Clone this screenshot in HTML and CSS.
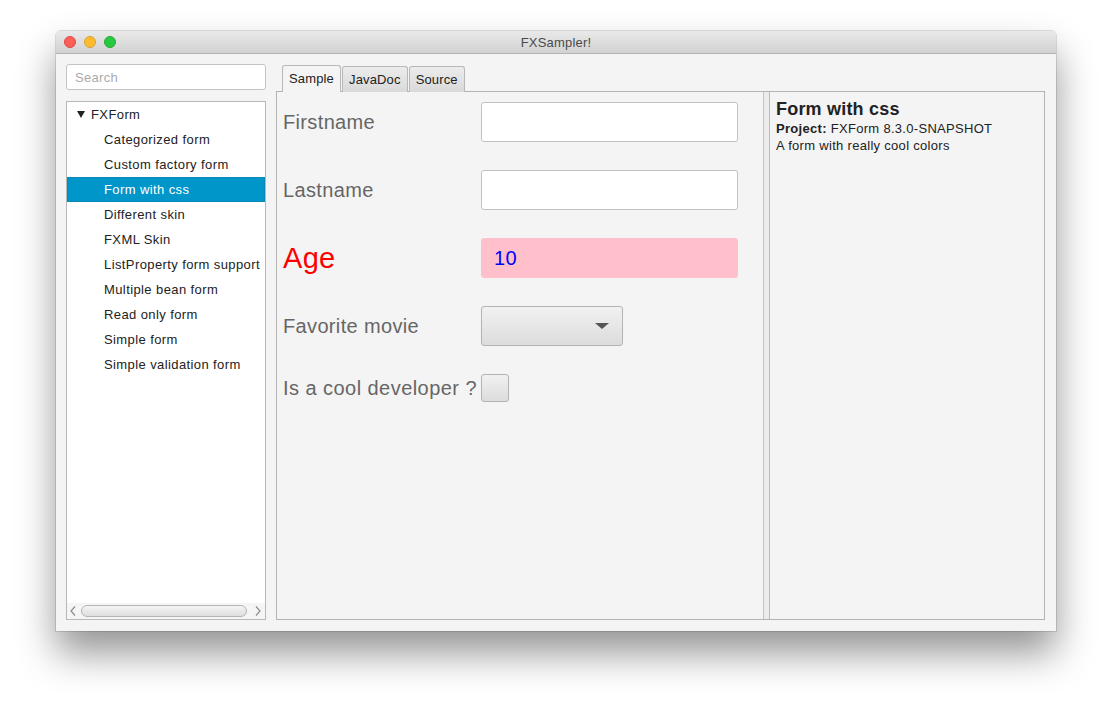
FILE: index.html
```html
<!DOCTYPE html>
<html>
<head>
<meta charset="utf-8">
<title>FXSampler!</title>
<link rel="stylesheet" href="styles.css">
</head>
<body>
<div class="window">
  <div class="titlebar">
    <div class="lights">
      <span class="light red"></span>
      <span class="light yellow"></span>
      <span class="light green"></span>
    </div>
    <div class="title">FXSampler!</div>
  </div>
  <div class="main">
    <div class="sidebar">
      <div class="search">Search</div>
      <div class="tree">
        <div class="tree-rows">
          <div class="row root"><span class="arrow"></span>FXForm</div>
          <div class="row child">Categorized form</div>
          <div class="row child">Custom factory form</div>
          <div class="row child selected">Form with css</div>
          <div class="row child">Different skin</div>
          <div class="row child">FXML Skin</div>
          <div class="row child">ListProperty form support</div>
          <div class="row child">Multiple bean form</div>
          <div class="row child">Read only form</div>
          <div class="row child">Simple form</div>
          <div class="row child">Simple validation form</div>
        </div>
        <div class="hscroll">
          <svg class="sarrow" width="8" height="12" viewBox="0 0 8 12"><path d="M6 1.5 L2 6 L6 10.5" fill="none" stroke="#8c8c8c" stroke-width="1.2"/></svg>
          <span class="thumb"></span>
          <svg class="sarrow" width="8" height="12" viewBox="0 0 8 12"><path d="M2 1.5 L6 6 L2 10.5" fill="none" stroke="#8c8c8c" stroke-width="1.2"/></svg>
        </div>
      </div>
    </div>
    <div class="content">
      <div class="tabs">
        <div class="tab active">Sample</div>
        <div class="tab">JavaDoc</div>
        <div class="tab">Source</div>
      </div>
      <div class="pane">
        <div class="sample">
          <div class="form">
            <div class="label">Firstname</div>
            <div class="field"><div class="input"></div></div>
            <div class="label">Lastname</div>
            <div class="field"><div class="input"></div></div>
            <div class="label age">Age</div>
            <div class="field"><div class="input pink">10</div></div>
            <div class="label">Favorite movie</div>
            <div class="field"><div class="combo"><span class="caret"></span></div></div>
            <div class="label small">Is a cool developer ?</div>
            <div class="field"><div class="check"></div></div>
          </div>
        </div>
        <div class="divider"></div>
        <div class="info">
          <div class="info-title">Form with css</div>
          <div class="info-line"><b>Project:</b> FXForm 8.3.0-SNAPSHOT</div>
          <div class="info-line">A form with really cool colors</div>
        </div>
      </div>
    </div>
  </div>
</div>
</body>
</html>
```

FILE: styles.css
```css
html, body {
  margin: 0;
  padding: 0;
  background: #ffffff;
}
body {
  font-family: "Liberation Sans", Arial, sans-serif;
  color: #333;
  padding: 31px 0 0 56px;
  height: 712px;
  box-sizing: border-box;
  overflow: hidden;
}
.window {
  width: 1000px;
  height: 600px;
  border-radius: 5px 5px 0 0;
  box-shadow: 0 22px 38px rgba(0,0,0,0.42), 0 0 0 1px rgba(0,0,0,0.12);
  display: flex;
  flex-direction: column;
  background: #f4f4f4;
  overflow: hidden;
}
.titlebar {
  height: 22px;
  flex: none;
  background: linear-gradient(#e9e9e9, #d2d2d2);
  border-bottom: 1px solid #b3b3b3;
  display: flex;
  align-items: center;
  position: relative;
}
.lights {
  display: flex;
  gap: 8px;
  padding-left: 8px;
}
.light {
  width: 12px;
  height: 12px;
  border-radius: 50%;
  box-sizing: border-box;
}
.red { background: #fc5f57; border: 1px solid #df4744; }
.yellow { background: #fdbc2e; border: 1px solid #de9f34; }
.green { background: #28c840; border: 1px solid #27aa35; }
.title {
  position: absolute;
  left: 0;
  right: 0;
  text-align: center;
  font-size: 13px;
  color: #4a4a4a;
  letter-spacing: 0.2px;
  pointer-events: none;
}
.main {
  flex: 1;
  display: flex;
  padding: 10px 11px 11px 10px;
  gap: 10px;
  background: #f4f4f4;
}
.sidebar {
  width: 200px;
  display: flex;
  flex-direction: column;
  gap: 11px;
}
.search {
  height: 26px;
  box-sizing: border-box;
  border: 1px solid #c4c4c4;
  border-radius: 3px;
  background: #fff;
  font-size: 13px;
  color: #ababab;
  padding: 5px 8px;
  letter-spacing: 0.3px;
}
.tree {
  flex: 1;
  background: #fff;
  border: 1px solid #b8b8b8;
  display: flex;
  flex-direction: column;
}
.tree-rows {
  flex: 1;
  overflow: hidden;
}
.row {
  height: 25px;
  line-height: 25px;
  font-size: 13px;
  color: #222;
  white-space: nowrap;
  letter-spacing: 0.4px;
}
.root {
  padding-left: 10px;
  display: flex;
  align-items: center;
}
.arrow {
  width: 0;
  height: 0;
  border-left: 4px solid transparent;
  border-right: 4px solid transparent;
  border-top: 7px solid #222;
  margin-right: 6px;
}
.child {
  padding-left: 37px;
}
.selected {
  background: #0096c9;
  color: #fff;
  box-shadow: inset 0 0 0 1px #0a88b8;
}
.hscroll {
  height: 16px;
  display: flex;
  align-items: center;
  gap: 4px;
  padding: 0 3px 0 2px;
  background: #f5f5f5;
}
.sarrow {
  flex: none;
}
.thumb {
  flex: 1;
  height: 12px;
  border: 1px solid #b4b4b4;
  border-radius: 6px;
  background: linear-gradient(#f4f4f4, #dedede);
  box-sizing: border-box;
  margin-right: 3px;
}
.content {
  flex: 1;
  display: flex;
  flex-direction: column;
}
.tabs {
  display: flex;
  gap: 1px;
  padding-left: 6px;
  height: 28px;
  align-items: flex-end;
  margin-bottom: -1px;
  position: relative;
  z-index: 1;
}
.tab {
  height: 26px;
  box-sizing: border-box;
  border: 1px solid #b8b8b8;
  border-bottom: none;
  border-radius: 3px 3px 0 0;
  padding: 5px 6px 0;
  font-size: 13px;
  color: #222;
  background: linear-gradient(#ececec, #d9d9d9);
  letter-spacing: 0.15px;
}
.tab.active {
  background: #f4f4f4;
  height: 27px;
  padding-top: 5px;
}
.pane {
  flex: 1;
  border: 1px solid #b3b3b3;
  display: flex;
  background: #f4f4f4;
}
.sample {
  width: 486px;
  padding: 10px 6px;
  box-sizing: border-box;
}
.form {
  display: grid;
  grid-template-columns: 198px auto;
  row-gap: 28px;
  align-items: center;
}
.label {
  font-size: 20px;
  color: #666;
  letter-spacing: 0.35px;
  white-space: nowrap;
}
.label.small {
  font-size: 20px;
  letter-spacing: 0.45px;
}
.label.age {
  font-size: 29px;
  color: #ff0000;
  letter-spacing: 0.3px;
}
.field {
  display: flex;
}
.input {
  width: 257px;
  height: 40px;
  box-sizing: border-box;
  background: #fff;
  border: 1px solid #c2c2c2;
  border-radius: 3px;
  font-size: 20px;
  padding: 8px 12px;
  color: #0000ff;
}
.input.pink {
  background: #ffc0cb;
  border-color: #ffc0cb;
  letter-spacing: 0.3px;
}
.combo {
  width: 142px;
  height: 40px;
  box-sizing: border-box;
  border: 1px solid #b3b3b3;
  border-radius: 3px;
  background: linear-gradient(#f1f1f1, #dcdcdc);
  display: flex;
  align-items: center;
  justify-content: flex-end;
  padding-right: 13px;
}
.caret {
  width: 0;
  height: 0;
  border-left: 7px solid transparent;
  border-right: 7px solid transparent;
  border-top: 6px solid #555;
}
.check {
  width: 28px;
  height: 28px;
  box-sizing: border-box;
  border: 1px solid #b3b3b3;
  border-radius: 3px;
  background: linear-gradient(#f1f1f1, #dcdcdc);
}
.divider {
  width: 7px;
  box-sizing: border-box;
  border-left: 1px solid #c4c4c4;
  border-right: 1px solid #bcbcbc;
  background: #ebebeb;
}
.info {
  flex: 1;
  padding: 6px 6px;
}
.info-title {
  font-size: 18px;
  font-weight: bold;
  color: #222;
  line-height: 22px;
  letter-spacing: 0.2px;
}
.info-line {
  font-size: 13px;
  color: #222;
  line-height: 17px;
  letter-spacing: 0.3px;
}
.info-line b {
  font-weight: bold;
}
```
